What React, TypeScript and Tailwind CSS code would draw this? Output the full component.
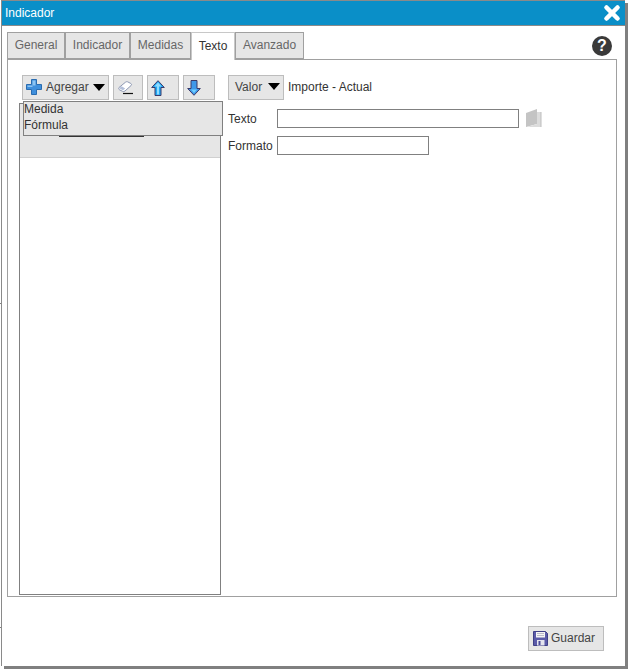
import React from 'react';
import { X } from 'lucide-react';

const tabs = [
  { label: 'General', width: 'w-[58px]' },
  { label: 'Indicador', width: 'w-[65px]' },
  { label: 'Medidas', width: 'w-[61px]' },
  { label: 'Texto', width: 'w-[44px]', active: true },
  { label: 'Avanzado', width: 'w-[69px]' },
];

const toolBtn = 'h-[25px] flex items-center bg-[#e6e6e6] border border-[#bdbdbd]';

const Caret = () => (
  <span className="w-0 h-0 border-x-[6px] border-x-transparent border-t-[7px] border-t-black" />
);

const PlusIcon = () => (
  <svg width="18" height="18" viewBox="0 0 18 18">
    <path d="M6.500 1.500h5v5h5v5h-5v5h-5v-5h-5v-5h5z" fill="#3f8fdc" stroke="#2a6cb0" strokeWidth="1" />
    <path d="M7.500 2.500h3v5h-3zM2.500 7.500h5v1.500h-5z" fill="#8cc4f2" />
  </svg>
);

const EraserIcon = () => (
  <svg width="16" height="14" viewBox="0 0 16 14">
    <path d="M1 6.500L7.500 1.200c.8-.6 1.700-.7 2.500-.2l2.800 1.500c.9.500 1 1.400.2 2.100L7 10c-.7.600-1.700.7-2.500.3L1.500 8.800C.6 8.300.4 7.200 1 6.500z" fill="#ffffff" stroke="#8d98b4" />
    <path d="M1.200 7.200l3.800 2.100 2.200-1.800-3.600-2.300z" fill="#b4c0da" />
    <path d="M5 12.500h10" stroke="#111" strokeWidth="1.200" />
  </svg>
);

const UpIcon = () => (
  <svg width="14" height="16" viewBox="0 0 14 16">
    <path d="M7 .700l6.300 6.800H10v8H4v-8H.700z" fill="#22a8f4" stroke="#3a3a6a" />
    <path d="M7 2.500L3.500 6.500H6v8h2v-8h2.500z" fill="#8fdcff" />
  </svg>
);

const DownIcon = () => (
  <svg width="14" height="16" viewBox="0 0 14 16">
    <path d="M4 .500h6v8h3.300L7 15.300.700 8.500H4z" fill="#3f98ea" stroke="#3a3a6a" />
    <path d="M4 9.500h6L7 13z" fill="#6fd0ff" />
  </svg>
);

const BookIcon = () => (
  <svg width="16" height="19" viewBox="0 0 16 19">
    <path d="M0 4L11 0v15L0 18z" fill="#c4c4c4" />
    <path d="M11 3h4v15H1l10-3z" fill="#dcdcdc" />
    <path d="M15 3v15" stroke="#bdbdbd" />
  </svg>
);

const SaveIcon = () => (
  <svg width="15" height="15" viewBox="0 0 15 15">
    <path d="M.500 .500h12l2 2v12h-14z" fill="#5a5aa8" stroke="#3f3f86" />
    <path d="M3 1h9v5.500H3z" fill="#f4f4f4" />
    <path d="M4 2.500h7M4 4.500h7" stroke="#b9b9c9" />
    <path d="M4 9h7.500v5.500H4z" fill="#e4e4ee" />
    <path d="M5.500 10h2v4h-2z" fill="#4a4a98" />
  </svg>
);

export default function App() {
  return (
    <div className="relative w-[629px] h-[669px] bg-white font-['Liberation_Sans',Arial,sans-serif] text-[12px] text-[#333]">
      <span className="absolute left-0 top-[303px] w-px h-px bg-[#808080]" />
      <span className="absolute left-0 top-[627px] w-px h-px bg-[#808080]" />

      <div className="ml-px w-[624px] h-[666px] flex flex-col bg-white border-l border-[#8a8a8a] shadow-[3px_3px_0_#808080]">
        <header className="h-[26px] flex-shrink-0 flex items-center justify-between bg-[#0a8fc8] border-t border-[#8a8a8a] border-b pl-[3px] pr-[2px] text-white">
          <span>Indicador</span>
          <X size={22} strokeWidth={5} color="#ffffff" />
        </header>

        <div className="relative flex-shrink-0 mt-[6px] ml-[5px] w-[610px]">
          <div className="flex h-[27px]">
            {tabs.map(tab => (
              <div
                key={tab.label}
                className={`${tab.width} flex items-center justify-center border border-[#a0a0a0] ${
                  tab.active
                    ? 'h-[28px] pb-[2px] relative z-10 bg-white border-b-0 border-[#c8c8c8] text-[#333]'
                    : 'pb-px bg-[#e6e6e6] text-[#666]'
                }`}
              >
                {tab.label}
              </div>
            ))}
          </div>
          <div className="absolute right-[5px] top-[4px] w-[20px] h-[20px] rounded-full bg-[#3a3a3a] flex items-center justify-center text-white font-bold text-[16px]">
            ?
          </div>

          <div className="h-[538px] flex border border-[#a0a0a0] bg-white">
            <div className="relative w-[202px] ml-[11px] flex-shrink-0 flex flex-col pt-[15px]">
              <div className="flex gap-1 pl-[3px] h-[25px]">
                <button className={`${toolBtn} w-[87px] pl-[2px] gap-[3px] pb-px`}>
                  <PlusIcon />
                  <span className="text-[#444]">Agregar</span>
                  <span className="ml-px flex">
                    <Caret />
                  </span>
                </button>
                <button className={`${toolBtn} w-[30px] pl-[4px]`}>
                  <EraserIcon />
                </button>
                <button className={`${toolBtn} w-[32px] pl-[3px]`}>
                  <UpIcon />
                </button>
                <button className={`${toolBtn} w-[32px] pl-[3px]`}>
                  <DownIcon />
                </button>
              </div>

              <div className="relative mt-[3px] h-[492px] border border-[#808080]">
                <div className="h-[54px] bg-[#e6e6e6] border-b border-[#d0d0d0]" />
                <div className="absolute left-[39px] top-[32px] w-[85px] h-px bg-[#333]" />
                <div className="absolute left-[3px] -top-[3px] w-[200px] h-[35px] bg-[#e6e6e6] border border-[#808080] text-[#333] leading-[16px]">
                  <div className="-mt-px">Medida</div>
                  <div>Fórmula</div>
                </div>
              </div>
            </div>

            <div className="ml-[7px] pt-[15px] flex flex-col">
              <div className="flex items-center h-[25px] gap-1 pb-px">
                <button className={`${toolBtn} w-[56px] pl-[6px] gap-[6px] pb-px text-[#444]`}>
                  <span>Valor</span>
                  <Caret />
                </button>
                <span>Importe - Actual</span>
              </div>
              <div className="flex items-center mt-[9px] h-[19px]">
                <span className="w-[49px]">Texto</span>
                <input className="w-[242px] h-[19px] border border-[#808080] bg-white" />
                <span className="ml-[7px] flex">
                  <BookIcon />
                </span>
              </div>
              <div className="flex items-center mt-[8px] h-[19px]">
                <span className="w-[49px]">Formato</span>
                <input className="w-[152px] h-[19px] border border-[#808080] bg-white" />
              </div>
            </div>
          </div>
        </div>

        <div className="flex justify-end pr-[21px] mt-[29px]">
          <button className="w-[76px] h-[25px] flex items-center pl-[4px] gap-[3px] pb-px bg-[#e6e6e6] border border-[#bdbdbd] text-[#444]">
            <SaveIcon />
            <span>Guardar</span>
          </button>
        </div>
      </div>
    </div>
  );
}
